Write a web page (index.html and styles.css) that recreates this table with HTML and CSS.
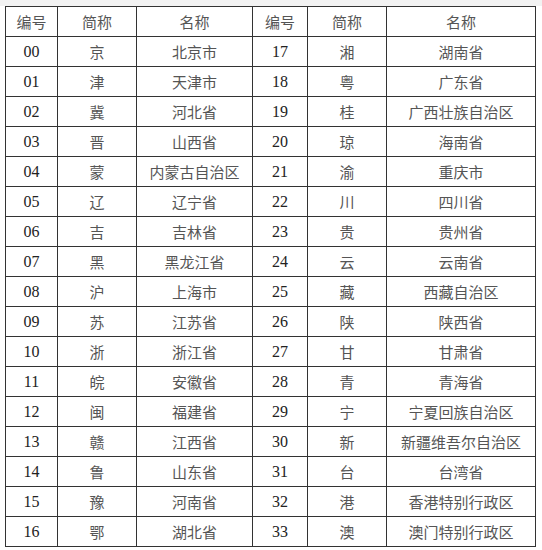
FILE: index.html
```
<!DOCTYPE html>
<html>
<head>
<meta charset="utf-8">
<link rel="stylesheet" href="styles.css">
</head>
<body>
<table class="codes">
<colgroup>
<col class="c1"><col class="c2"><col class="c3"><col class="c4"><col class="c5"><col class="c6">
</colgroup>
<thead>
<tr><th>编号</th><th>简称</th><th>名称</th><th>编号</th><th>简称</th><th>名称</th></tr>
</thead>
<tbody>
<tr><td class="num">00</td><td>京</td><td>北京市</td><td class="num">17</td><td>湘</td><td>湖南省</td></tr>
<tr><td class="num">01</td><td>津</td><td>天津市</td><td class="num">18</td><td>粤</td><td>广东省</td></tr>
<tr><td class="num">02</td><td>冀</td><td>河北省</td><td class="num">19</td><td>桂</td><td>广西壮族自治区</td></tr>
<tr><td class="num">03</td><td>晋</td><td>山西省</td><td class="num">20</td><td>琼</td><td>海南省</td></tr>
<tr><td class="num">04</td><td>蒙</td><td>内蒙古自治区</td><td class="num">21</td><td>渝</td><td>重庆市</td></tr>
<tr><td class="num">05</td><td>辽</td><td>辽宁省</td><td class="num">22</td><td>川</td><td>四川省</td></tr>
<tr><td class="num">06</td><td>吉</td><td>吉林省</td><td class="num">23</td><td>贵</td><td>贵州省</td></tr>
<tr><td class="num">07</td><td>黑</td><td>黑龙江省</td><td class="num">24</td><td>云</td><td>云南省</td></tr>
<tr><td class="num">08</td><td>沪</td><td>上海市</td><td class="num">25</td><td>藏</td><td>西藏自治区</td></tr>
<tr><td class="num">09</td><td>苏</td><td>江苏省</td><td class="num">26</td><td>陕</td><td>陕西省</td></tr>
<tr><td class="num">10</td><td>浙</td><td>浙江省</td><td class="num">27</td><td>甘</td><td>甘肃省</td></tr>
<tr><td class="num">11</td><td>皖</td><td>安徽省</td><td class="num">28</td><td>青</td><td>青海省</td></tr>
<tr><td class="num">12</td><td>闽</td><td>福建省</td><td class="num">29</td><td>宁</td><td>宁夏回族自治区</td></tr>
<tr><td class="num">13</td><td>赣</td><td>江西省</td><td class="num">30</td><td>新</td><td>新疆维吾尔自治区</td></tr>
<tr><td class="num">14</td><td>鲁</td><td>山东省</td><td class="num">31</td><td>台</td><td>台湾省</td></tr>
<tr><td class="num">15</td><td>豫</td><td>河南省</td><td class="num">32</td><td>港</td><td>香港特别行政区</td></tr>
<tr><td class="num">16</td><td>鄂</td><td>湖北省</td><td class="num">33</td><td>澳</td><td>澳门特别行政区</td></tr>
</tbody>
</table>
</body>
</html>
```
FILE: styles.css
```
html, body {
  margin: 0;
  padding: 0;
}
body {
  background: linear-gradient(#f2f2f2 0, #f2f2f2 6px, #ffffff 6px);
  padding: 6px 0 0 5px;
  width: 542px;
  height: 550px;
  box-sizing: border-box;
  overflow: hidden;
}
.codes {
  border-collapse: collapse;
  table-layout: fixed;
  width: 531px;
  background: #fff;
  font-family: "Liberation Serif", "Noto Sans CJK SC", serif;
  font-size: 15px;
  color: #3a3a3a;
}
.c1 { width: 52px; }
.c2 { width: 79px; }
.c3 { width: 116px; }
.c4 { width: 55px; }
.c5 { width: 79px; }
.c6 { width: 149px; }
.codes th,
.codes td {
  border: 1px solid #333;
  height: 29px;
  padding: 0;
  text-align: center;
  vertical-align: middle;
  font-weight: normal;
  white-space: nowrap;
  color: #555;
}
.codes td.num {
  font-size: 16px;
  color: #222;
}
```
